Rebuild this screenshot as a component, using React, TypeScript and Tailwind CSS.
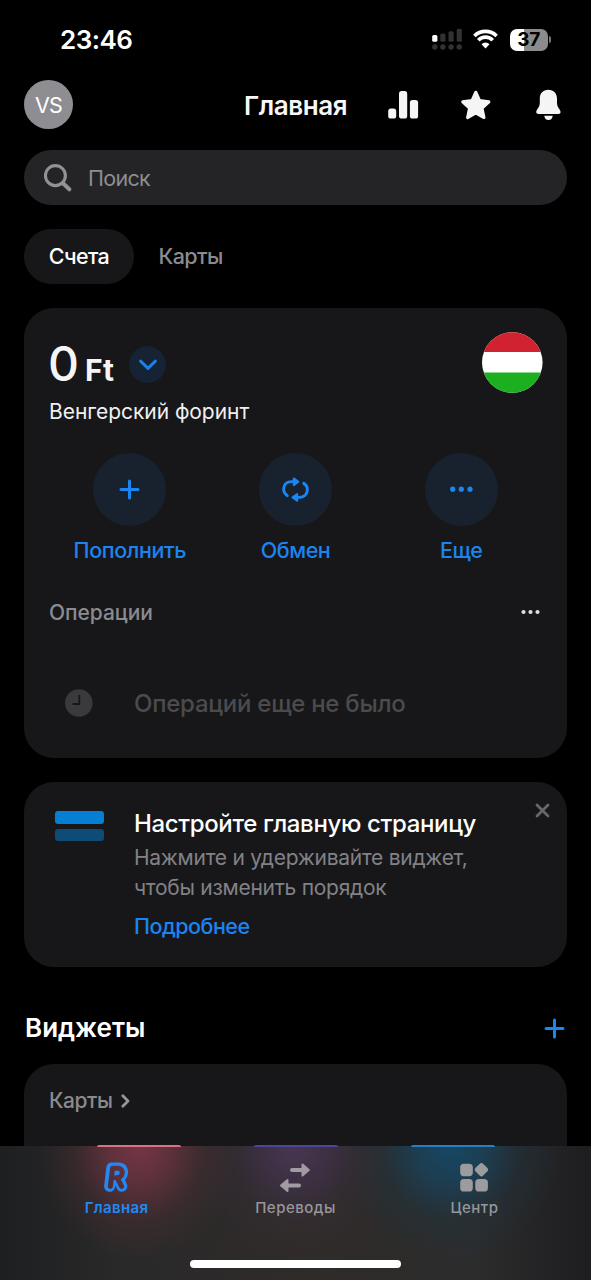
import React from 'react';

function StatusBar() {
  return (
    <div className="flex h-[80px] shrink-0 items-start justify-between pl-[60px] pr-[40px]">
      <div className="mt-[24px] text-[26px] leading-[32px] font-semibold tracking-[-0.5px] text-white">23:46</div>
      <div className="mt-[28px] flex items-start">
        <svg className="mr-[11px]" width="30" height="23" viewBox="0 0 30 23">
          <rect x="0.2" y="7" width="5.2" height="6.8" rx="1.6" fill="#fff" />
          <g fill="#323234">
            <rect x="8.3" y="5.6" width="5.2" height="8.2" rx="1.6" />
            <rect x="16.5" y="3.3" width="5.2" height="10.5" rx="1.6" />
            <rect x="24.7" y="0.7" width="5.2" height="13.1" rx="1.6" />
            <circle cx="2.8" cy="19" r="2.7" />
            <circle cx="10.9" cy="19" r="2.7" />
            <circle cx="19.1" cy="19" r="2.7" />
            <circle cx="27.2" cy="19" r="2.7" />
          </g>
        </svg>
        <svg className="mt-[1px] mr-[12px]" width="25" height="20" viewBox="0 0 25 20">
          <g fill="none" stroke="#fff" strokeWidth="3.7">
            <path d="M1.4 7 A15.8 15.8 0 0 1 23.6 7" />
            <path d="M5.3 11.2 A10.2 10.2 0 0 1 19.7 11.2" />
          </g>
          <path d="M8.5 15.2 A5.8 5.8 0 0 1 16.5 15.2 L12.5 19.4 Z" fill="#fff" />
        </svg>
        <div className="mt-[1px] flex items-center">
          <div className="flex h-[21.5px] w-[38.5px] items-center justify-center rounded-[7px] bg-[linear-gradient(90deg,#fff_37%,#8b8b8b_37%)] text-[19px] leading-[22px] font-bold tracking-[-0.2px] text-black">
            37
          </div>
          <div className="ml-[1px] h-[7px] w-[2px] rounded-r-full bg-[#77777a]" />
        </div>
      </div>
    </div>
  );
}

function Header() {
  return (
    <div className="flex h-[49px] shrink-0 items-center px-6">
      <div className="flex size-[49px] items-center justify-center rounded-full bg-[#8e8e92] pt-px text-[21.5px] tracking-[-0.7px] text-white">VS</div>
      <div className="ml-[171px] w-[143px] pt-[2px] text-[26px] leading-[32px] font-semibold tracking-[-0.4px] whitespace-nowrap text-[#f7f7f8]">Главная</div>
      <svg width="180" height="32" viewBox="387 89 180 32" className="-mr-6 shrink-0" fill="#f5f5f5">
        <rect x="388.2" y="108.5" width="8" height="10.1" rx="2.7" />
        <rect x="399" y="91" width="8.2" height="27.6" rx="2.7" />
        <rect x="409.9" y="99.9" width="8.2" height="18.7" rx="2.7" />
        <path
          d="M475.8 92.2 L479.6 100.6 L488.9 101.8 L482.1 108.2 L484 117.6 L475.8 113 L467.6 117.6 L469.5 108.2 L462.7 101.8 L472 100.6 Z"
          stroke="#f5f5f5"
          strokeWidth="3"
          strokeLinejoin="round"
        />
        <path d="M548.3 89.7 C543 89.7 539.8 93.4 539.8 98.6 V103 C539.8 107.5 536.2 109.6 536.2 112.3 Q536.2 114 538.6 114 H558.4 Q560.6 114 560.6 112.3 C560.6 109.6 557 107.5 557 103 V98.6 C557 93.4 553.7 89.7 548.3 89.7 Z" />
        <path d="M544.3 115.7 H552.7 Q552.3 119.9 548.5 119.9 Q544.7 119.9 544.3 115.7 Z" />
      </svg>
    </div>
  );
}

function SearchBar() {
  return (
    <div className="mx-6 mt-[21px] flex h-[55px] shrink-0 items-center rounded-full bg-[#242426] pl-5 text-[#8d8d91]">
      <svg width="28" height="28" viewBox="0 0 28 28" fill="none" stroke="#929296">
        <circle cx="11.4" cy="11.6" r="10" strokeWidth="3.1" />
        <path d="M19 19.2 L25.3 25.3" strokeWidth="4" strokeLinecap="round" />
      </svg>
      <span className="ml-4 text-[21.5px] leading-[28px] tracking-[-0.7px]">Поиск</span>
    </div>
  );
}

function Tabs() {
  return (
    <div className="mx-6 mt-6 flex h-[55px] shrink-0 items-center text-[21.5px] tracking-[-0.6px]">
      <div className="flex h-[55px] w-[110px] items-center justify-center rounded-full bg-[#171719] font-medium text-white">Счета</div>
      <div className="ml-[24.5px] font-medium text-[#8b8b8f]">Карты</div>
    </div>
  );
}

function Action({ label, children }: { label: string; children: React.ReactNode }) {
  return (
    <div className="flex flex-1 flex-col items-center">
      <div className="flex size-[73px] items-center justify-center rounded-full bg-[#18222e]">{children}</div>
      <div className="mt-[10px] text-[21.5px] leading-[28px] font-medium tracking-[-0.4px] whitespace-nowrap text-[#1b84f1]">{label}</div>
    </div>
  );
}

function AccountCard() {
  return (
    <div className="mx-6 mt-6 flex h-[450px] shrink-0 flex-col rounded-[30px] bg-[#171719] px-6 pt-6">
      <div className="flex h-[62px] justify-between">
        <div className="flex items-start">
          <span className="mt-[7px] w-[30px] text-[48px] leading-[50px] font-medium tracking-[-1px] text-[#f5f5f5]">0</span>
          <span className="mt-[21px] ml-[7px] w-[31px] text-[30px] leading-[34px] font-bold tracking-[0.5px] text-[#f5f5f5]">Ft</span>
          <span className="mt-[14px] ml-[13px] flex size-[37px] items-center justify-center rounded-full bg-[#162334]">
            <svg width="20" height="12" viewBox="0 0 20 12" fill="none" stroke="#1b80ea" strokeWidth="3" strokeLinecap="round" strokeLinejoin="round">
              <path d="M2.6 2.2 L10 9.4 L17.4 2.2" />
            </svg>
          </span>
        </div>
        <svg width="61" height="61" viewBox="0 0 61 61">
          <clipPath id="flag">
            <circle cx="30.3" cy="30.5" r="30.3" />
          </clipPath>
          <g clipPath="url(#flag)">
            <path d="M0 0 H61 V61 H0 Z" fill="#fff" />
            <path d="M0 0 H61 V20 H0 Z" fill="#d0222f" />
            <path d="M0 40.5 H61 V61 H0 Z" fill="#1caf20" />
          </g>
        </svg>
      </div>
      <div className="ml-px mt-[4px] text-[21px] leading-[28px] tracking-[-0.05px] text-[#f0f0f1]">Венгерский форинт</div>
      <div className="-mx-px mt-[27px] flex">
        <Action label="Пополнить">
          <svg width="21" height="21" viewBox="0 0 21 21" stroke="#1a86f3" strokeWidth="3" strokeLinecap="round">
            <path d="M10.5 2 V19 M2 10.5 H19" />
          </svg>
        </Action>
        <Action label="Обмен">
          <svg width="27" height="25" viewBox="0 0 27 25" fill="none" stroke="#1a86f3" strokeWidth="2.9" strokeLinecap="round" strokeLinejoin="round">
            <path d="M5.3 18.6 C2.8 16.9 1.6 14.8 1.6 12.2 C1.6 7.6 5 4.6 9.6 4.6 H12" />
            <path d="M21.7 6.2 C24.2 7.9 25.4 10 25.4 12.6 C25.4 17.2 22 20.4 17.4 20.4 H15" />
            <path d="M11.8 1.4 L16.4 4.7 L11.8 8.2 Z" fill="#1a86f3" strokeWidth="2" />
            <path d="M15.2 17 L10.6 20.4 L15.2 23.7 Z" fill="#1a86f3" strokeWidth="2" />
          </svg>
        </Action>
        <Action label="Еще">
          <svg width="25" height="7" viewBox="0 0 25 7" fill="#1a86f3">
            <circle cx="3.7" cy="3.2" r="2.6" />
            <circle cx="12.3" cy="3.2" r="2.6" />
            <circle cx="21" cy="3.2" r="2.6" />
          </svg>
        </Action>
      </div>
      <div className="mt-[35px] flex h-[28px] items-center justify-between pr-[2px] pl-px">
        <span className="text-[21px] font-medium tracking-[-0.05px] text-[#8b8b8f]">Операции</span>
        <svg className="-mt-[2px]" width="20" height="6" viewBox="0 0 20 6" fill="#dededf">
          <circle cx="2.5" cy="3" r="2.1" />
          <circle cx="9.5" cy="3" r="2.1" />
          <circle cx="16.5" cy="3" r="2.1" />
        </svg>
      </div>
      <div className="mt-[61px] flex h-[32px] items-center pl-[17px]">
        <svg className="-mt-[2px]" width="28" height="28" viewBox="0 0 28 28">
          <circle cx="13.8" cy="14" r="13.8" fill="#3a3a3c" />
          <path d="M14.3 6 V15 H7.5" fill="none" stroke="#171719" strokeWidth="1.8" />
        </svg>
        <span className="ml-[41px] text-[24px] leading-[32px] font-medium tracking-[-0.25px] whitespace-nowrap text-[#4b4b4e]">Операций еще не было</span>
      </div>
    </div>
  );
}

function TipCard() {
  return (
    <div className="mx-6 mt-6 flex h-[185px] shrink-0 items-start rounded-[30px] bg-[#171719]">
      <div className="mt-[29px] ml-[30.5px] flex w-[49px] flex-col gap-[5px]">
        <div className="h-[12.5px] rounded-[3px] bg-[#057fd3]" />
        <div className="h-[12.5px] rounded-[3px] bg-[#0e4c77]" />
      </div>
      <div className="ml-[30.5px] w-[380px] whitespace-nowrap">
        <div className="mt-[26px] text-[24px] leading-[32px] font-medium tracking-[-0.36px] text-white">Настройте главную страницу</div>
        <div className="mt-[3px] text-[21px] leading-[30px] tracking-[-0.27px] text-[#828286]">
          Нажмите и удерживайте виджет,
          <br />
          чтобы изменить порядок
        </div>
        <div className="mt-[8px] text-[21.5px] leading-[30px] font-medium tracking-[-0.5px] text-[#1b84f1]">Подробнее</div>
      </div>
      <svg className="mt-[21px] ml-[21px] shrink-0" width="15" height="15" viewBox="0 0 15 15" stroke="#68686b" strokeWidth="2.8" strokeLinecap="round">
        <path d="M2 2 L13 13 M13 2 L2 13" />
      </svg>
    </div>
  );
}

function WidgetsSection() {
  return (
    <>
      <div className="mt-[43px] flex h-[36px] shrink-0 items-center justify-between pr-[26px] pl-[25px]">
        <span className="-mt-px text-[26px] font-semibold text-white">Виджеты</span>
        <svg width="21" height="21" viewBox="0 0 21 21" stroke="#1a86f3" strokeWidth="3" strokeLinecap="round">
          <path d="M10.5 2 V19 M2 10.5 H19" />
        </svg>
      </div>
      <div className="relative z-10 mx-6 mt-[18px] flex h-[82px] shrink-0 flex-col justify-between rounded-t-[30px] bg-[#171719] pt-[22px]">
        <div className="flex h-[30px] items-center pl-[25px]">
          <span className="text-[21px] font-medium tracking-[-0.45px] text-[#8b8b8f]">Карты</span>
          <svg className="ml-[9px]" width="9" height="14" viewBox="0 0 9 14" fill="none" stroke="#98989b" strokeWidth="2.7" strokeLinecap="round" strokeLinejoin="round">
            <path d="M1.8 1.8 L7 7 L1.8 12.2" />
          </svg>
        </div>
        <div className="-mb-px flex h-[2px] gap-[73px] pl-[73px]">
          <div className="w-[84px] rounded-t-[2px] bg-[#d97287]" />
          <div className="w-[84px] rounded-t-[2px] bg-[#4a469a]" />
          <div className="w-[84px] rounded-t-[2px] bg-[#257fc4]" />
        </div>
      </div>
    </>
  );
}

function NavItem({ label, active, children }: { label: string; active?: boolean; children: React.ReactNode }) {
  return (
    <div className="flex w-[179px] flex-col items-center">
      <div className="-ml-px flex h-[32px] items-center justify-center">{children}</div>
      <div className={active ? 'mt-[5px] text-[15px] leading-[20px] font-semibold tracking-[0.35px] text-[#2388f2]' : 'mt-[5px] text-[15px] leading-[20px] font-medium tracking-[0.5px] text-[#97979b]'}>
        {label}
      </div>
    </div>
  );
}

function BottomNav() {
  return (
    <div className="flex h-[134px] shrink-0 flex-col items-center justify-between overflow-hidden bg-[radial-gradient(ellipse_100px_115px_at_139px_0px,#753545_0%,rgba(108,51,64,0.8)_30%,rgba(85,46,53,0.35)_65%,transparent_100%),radial-gradient(ellipse_100px_115px_at_295px_0px,#493653_0%,rgba(67,50,75,0.7)_35%,rgba(60,46,60,0.3)_65%,transparent_100%),radial-gradient(ellipse_110px_115px_at_451px_0px,#174763_0%,rgba(24,67,92,0.8)_30%,rgba(28,55,70,0.35)_62%,transparent_100%),radial-gradient(ellipse_160px_80px_at_300px_110px,rgba(53,45,40,0.35),transparent),linear-gradient(90deg,#1e1f21_0%,#292929_20%,#2c2a29_50%,#2c2c2d_80%,#1e1e20_100%)] pt-[15px] pb-[12px]">
      <div className="flex w-[537px]">
        <NavItem label="Главная" active>
          <svg width="28" height="32" viewBox="0 0 28 32" fill="none" strokeLinecap="round" strokeLinejoin="round">
            <mask id="mark" maskUnits="userSpaceOnUse" x="0" y="0" width="28" height="32">
              <rect width="28" height="32" fill="#fff" />
              <path d="M8.4 25.3 L10.6 7.3 H16.2 C22.2 7.3 21.2 16.8 15.2 16.8 L19.6 25.3" stroke="#000" strokeWidth="5" />
              <path d="M15.2 16.8 H10.5" stroke="#000" strokeWidth="4.4" />
            </mask>
            <g mask="url(#mark)" stroke="#2388f2">
              <path d="M7.6 25.3 L9.8 7 H17 C22.2 7 21.8 16 16 16.8 L19.8 25.3" strokeWidth="11" />
              <path d="M10 16.8 H16" strokeWidth="10" />
            </g>
          </svg>
        </NavItem>
        <NavItem label="Переводы">
          <svg width="32" height="32" viewBox="0 0 32 32" fill="#a09ca2" stroke="#a09ca2" strokeLinecap="round" strokeLinejoin="round">
            <path d="M13 9 H24 M9 24.5 H20" strokeWidth="4" />
            <path d="M23.5 3.5 L29.8 9 L23.5 14.5 Z" strokeWidth="2" />
            <path d="M8.5 19 L2 24.5 L8.5 30 Z" strokeWidth="2" />
          </svg>
        </NavItem>
        <NavItem label="Центр">
          <svg width="30" height="32" viewBox="0 0 30 32" fill="#9c9c9f">
            <rect x="1.2" y="2.7" width="12.6" height="12.6" rx="3.7" />
            <rect x="17" y="3.3" width="10.8" height="10.8" rx="2.6" transform="rotate(45 22.4 8.7)" />
            <rect x="1.2" y="18" width="12.6" height="12.6" rx="3.7" />
            <rect x="16.3" y="18" width="12.6" height="12.6" rx="3.7" />
          </svg>
        </NavItem>
      </div>
      <div className="h-[8px] w-[211px] rounded-full bg-white" />
    </div>
  );
}

export default function App() {
  return (
    <div className="flex h-[1280px] w-[591px] flex-col overflow-hidden bg-black font-['Inter','Liberation_Sans',sans-serif]">
      <StatusBar />
      <Header />
      <SearchBar />
      <Tabs />
      <AccountCard />
      <TipCard />
      <WidgetsSection />
      <BottomNav />
    </div>
  );
}
